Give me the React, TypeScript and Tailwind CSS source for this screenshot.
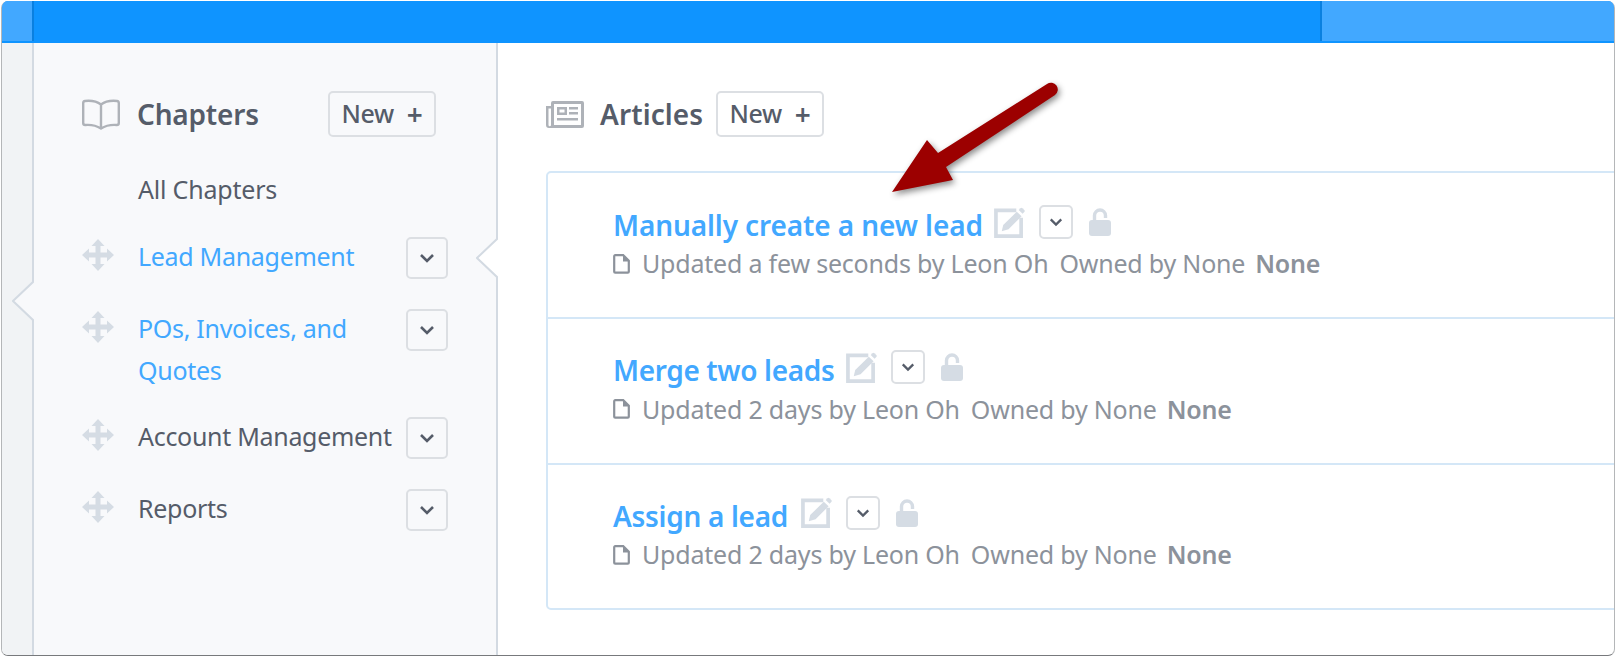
import React from "react"

const font = { fontFamily: '"Noto Sans", "Open Sans", sans-serif' }

const chapters = [
  { name: "Lead Management", active: true, height: "h-[72px]" },
  { name: "POs, Invoices, and Quotes", active: true, height: "h-[108px]" },
  { name: "Account Management", active: false, height: "h-[72px]" },
  { name: "Reports", active: false, height: "h-[72px]" },
]

const articles = [
  { title: "Manually create a new lead", updated: "Updated a few seconds by Leon Oh", titleClass: "w-[369px] tracking-[-0.1px]" },
  { title: "Merge two leads", updated: "Updated 2 days by Leon Oh", titleClass: "w-[221px] tracking-[-0.35px]" },
  { title: "Assign a lead", updated: "Updated 2 days by Leon Oh", titleClass: "w-[176px] tracking-[-0.3px]" },
]

function Chevron({ size = 16 }: { size?: number }) {
  return (
    <svg width={size} height={size} viewBox="0 0 16 16" fill="none">
      <path d="M2 5l6 6 6-6" stroke="#555c69" strokeWidth="2.6" />
    </svg>
  )
}

function MoveIcon() {
  return (
    <svg width="32" height="32" viewBox="0 0 32 32" fill="#d5dce4" className="shrink-0">
      <path d="M16 0L22.500 7H18.500V13.500H25V9.500L32 16L25 22.500V18.500H18.500V25H22.500L16 32L9.500 25H13.500V18.500H7V22.500L0 16L7 9.500V13.500H13.500V7H9.500Z" />
    </svg>
  )
}

function BookIcon() {
  return (
    <svg width="38" height="31" viewBox="0 0 38 31" fill="none" stroke="#aeb2b8" strokeWidth="2.4" className="shrink-0">
      <path d="M19 5.500C15 2.500 8 1.500 3 2c-1 .1-1.800 1-1.800 2v20c0 1.200 1 2 2 2 6-.5 11 .5 15.800 3.500 4.800-3 9.800-4 15.800-3.500 1 0 2-.8 2-2V4c0-1-.8-1.900-1.800-2-5-.5-12 .5-16 3.500zM19 5.500V29" />
    </svg>
  )
}

function NewsIcon() {
  return (
    <svg width="38" height="28" viewBox="0 0 38 28" fill="#aeb2b8" className="shrink-0">
      <path fillRule="evenodd" d="M7 1h29a2 2 0 0 1 2 2v23a2 2 0 0 1-2 2H3a3 3 0 0 1-3-3V6h5V3a2 2 0 0 1 2-2zm1 3v21h27V4zM2.500 8.500V25a.8.8 0 0 0 2.500 0V8.500z" />
      <path fillRule="evenodd" d="M11 7h10v8H11zm2.500 2.500v3h5v-3z" />
      <path d="M23 7h9v2.500h-9zM23 12h9v2.500h-9zM11 18h21v2.500H11z" />
    </svg>
  )
}

function EditIcon() {
  return (
    <svg width="31" height="31" viewBox="0 0 32 32" fill="none" className="shrink-0">
      <path d="M23 3.500H2v26.500h26V11" stroke="#d5dce4" strokeWidth="3.800" />
      <path d="M8 25l1.500-6.500L23.500 5l5 4.500L15 23z" fill="#d5dce4" />
      <path d="M25.500 3l1.800-1.800a1.500 1.500 0 0 1 2 0l2 2a1.500 1.500 0 0 1 0 2L29.500 7z" fill="#d5dce4" />
    </svg>
  )
}

function LockIcon() {
  return (
    <svg width="22" height="28" viewBox="0 0 22 28" fill="none" className="shrink-0">
      <path d="M5.500 13V7.500a5.500 5.500 0 0 1 11 0v2.500" stroke="#d5dce4" strokeWidth="3.400" />
      <rect x="0" y="12" width="22" height="16" rx="3" fill="#d5dce4" />
    </svg>
  )
}

function FileIcon() {
  return (
    <svg width="17" height="20" viewBox="0 0 17 20" fill="none" className="shrink-0">
      <path d="M1.200 2.200a1 1 0 0 1 1-1h8l5.600 5.600v10.900a1 1 0 0 1-1 1H2.200a1 1 0 0 1-1-1z" stroke="#8c929b" strokeWidth="2.200" />
      <path d="M10 1v6.500h6.500" fill="#8c929b" />
    </svg>
  )
}

function NewButton() {
  return (
    <button className="flex h-[46px] w-[108px] shrink-0 items-center justify-center gap-[13px] rounded-[5px] border-2 border-[#dcdfe3] text-[25px] font-medium tracking-[-0.4px] text-[#555c69]">
      New
      <span className="text-[28px] leading-none font-semibold">+</span>
    </button>
  )
}

export default function App() {
  return (
    <div className="h-[658px] w-full bg-white pt-px pl-px" style={font}>
      <div className="flex h-[655px] w-[1614px] flex-col overflow-hidden rounded-[7px] border-x border-b border-x-[#b4b6b8] border-b-[#77797c]">
        <div className="flex h-[42px] shrink-0 justify-between bg-[#0f94ff] pb-[2px]">
          <div className="w-[32px] border-r-2 border-[#0a80e0] bg-[#42a8ff]"></div>
          <div className="w-[294px] border-l-2 border-[#0a80e0] bg-[#42a8ff]"></div>
        </div>

        <div className="flex min-h-0 flex-1">
          <div className="relative w-[32px] shrink-0 border-r-2 border-[#d3dae2] bg-[#f1f3f5]">
            <svg width="22" height="42" viewBox="0 0 22 42" className="absolute top-[237px] left-[10px]">
              <path d="M22 1L1 21l21 20" fill="#f8f9fb" stroke="#d3dae2" strokeWidth="2" />
            </svg>
          </div>

          <div className="relative w-[464px] shrink-0 border-r-2 border-[#d3dae2] bg-[#f8f9fb] pt-[48px] pl-[48px]">
            <svg width="22" height="42" viewBox="0 0 22 42" className="absolute top-[194px] right-[-2px]">
              <path d="M22 1L1 21l21 20" fill="#ffffff" stroke="#d3dae2" strokeWidth="2" />
            </svg>
            <div className="flex h-[46px] items-center">
              <BookIcon />
              <h2 className="ml-[17px] w-[191px] text-[28px] font-semibold tracking-[-0.2px] text-[#555c69]">Chapters</h2>
              <NewButton />
            </div>
            <div className="mt-[31px] mb-[27px] ml-[56px] text-[25px] leading-[42px] tracking-[-0.2px] text-[#555c69]">All Chapters</div>
            <div className="flex flex-col">
              {chapters.map((c) => (
                <div key={c.name} className={"flex items-start " + c.height}>
                  <div className="pt-[2px]">
                    <MoveIcon />
                  </div>
                  <div
                    className={
                      c.active
                        ? "-mt-[2px] ml-[24px] w-[268px] text-[25px] leading-[42px] tracking-[-0.3px] text-[#42a8ff]"
                        : "-mt-[2px] ml-[24px] w-[268px] text-[25px] leading-[42px] tracking-[-0.3px] text-[#555c69]"
                    }
                  >
                    {c.name}
                  </div>
                  <button className="flex h-[42px] w-[42px] shrink-0 items-center justify-center rounded-[5px] border-2 border-[#dcdfe3]">
                    <Chevron />
                  </button>
                </div>
              ))}
            </div>
          </div>

          <div className="relative min-w-0 flex-1 overflow-hidden pt-[48px] pl-[48px]">
            <div className="flex h-[46px] items-center">
              <NewsIcon />
              <h2 className="ml-[16px] w-[116px] text-[28px] font-semibold tracking-[0.1px] whitespace-nowrap text-[#555c69]">Articles</h2>
              <NewButton />
            </div>
            <div className="mt-[34px] flex h-[439px] w-[1200px] flex-col rounded-[5px] border-2 border-[#d4e7f7]">
              {articles.map((a, i) => (
                <div
                  key={a.title}
                  className={
                    i === 0
                      ? "h-[145px] pt-[34px] pl-[65px]"
                      : "h-[146px] border-t-2 border-[#d4e7f7] pt-[33px] pl-[65px]"
                  }
                >
                  <div className="flex h-[36px] items-center">
                    <a className={"text-[28px] leading-[36px] font-semibold whitespace-nowrap text-[#42a8ff] " + a.titleClass}>{a.title}</a>
                    <div className="mb-[6px] ml-[12px] flex items-center">
                      <EditIcon />
                      <button className="ml-[14px] flex h-[34px] w-[34px] items-center justify-center rounded-[5px] border-2 border-[#dcdfe3]">
                        <Chevron size={14} />
                      </button>
                      <div className="ml-[16px]">
                        <LockIcon />
                      </div>
                    </div>
                  </div>
                  <div className="mt-[3px] flex h-[36px] items-center text-[25px] tracking-[-0.2px] whitespace-pre text-[#8c929b]">
                    <FileIcon />
                    <span className="ml-[12px]">{a.updated}</span>
                    <span className="ml-[11px]">Owned by None</span>
                    <span className="ml-[10px] font-semibold">None</span>
                  </div>
                </div>
              ))}
            </div>
          </div>
        </div>
      </div>

      <svg width="200" height="160" viewBox="0 0 200 160" className="absolute top-[69px] left-[870px] drop-shadow-[2px_3px_3px_rgba(0,0,0,0.45)]">
        <path d="M22 123l35-52 11 13L177 15a6.500 6.500 0 0 1 8 11L76 98l7 13z" fill="#9c0000" />
      </svg>
    </div>
  )
}
